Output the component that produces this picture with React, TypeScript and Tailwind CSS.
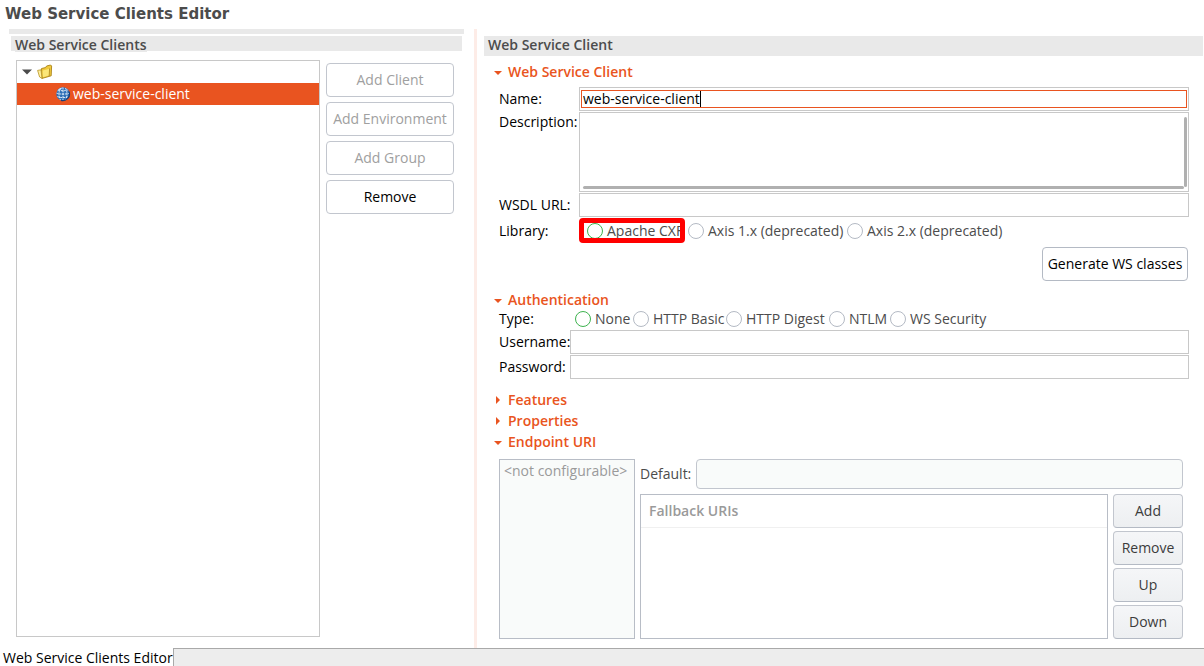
import { useState } from "react";
import type { ReactNode } from "react";

const libraries = [
  { id: "cxf", label: "Apache CXF", width: "w-[101px]" },
  { id: "axis1", label: "Axis 1.x (deprecated)", width: "w-[159px]" },
  { id: "axis2", label: "Axis 2.x (deprecated)", width: "w-[159px]" },
];

const authTypes = [
  { id: "none", label: "None", width: "w-[58px]" },
  { id: "basic", label: "HTTP Basic", width: "w-[93px]" },
  { id: "digest", label: "HTTP Digest", width: "w-[103px]" },
  { id: "ntlm", label: "NTLM", width: "w-[61px]" },
  { id: "wss", label: "WS Security", width: "w-[100px]" },
];

const clientActions = [
  { label: "Add Client", disabled: true },
  { label: "Add Environment", disabled: true },
  { label: "Add Group", disabled: true },
  { label: "Remove", disabled: false },
];

const inputClass = "h-6 w-full min-w-0 border border-[#c8c8c8] bg-white px-1 outline-none";

function FolderIcon() {
  return (
    <svg width="16" height="16" viewBox="0 0 16 16" className="shrink-0">
      <path d="M4.5 4.5 L8.5 3.6 L9.6 2 L13.6 1 L14.6 2 L14.2 11.8 L5 14.4 Z" fill="#f0c93c" stroke="#a98218" strokeWidth="0.9" />
      <path d="M5.6 6.4 L9.8 5.4 L12.8 4.6 L12.4 11.2 L5.8 13.2 Z" fill="#fbe678" />
      <path d="M12.6 4.4 L12.2 12" fill="none" stroke="#a98218" strokeWidth="0.8" />
      <path d="M0.6 6.4 L4 5.8 L5 14.4 L2.6 13 Z" fill="#fff0a0" stroke="#b8921e" strokeWidth="0.8" />
    </svg>
  );
}

function GlobeIcon() {
  return (
    <svg width="16" height="16" viewBox="0 0 16 16" className="shrink-0">
      <circle cx="8" cy="8" r="6.7" fill="#2d6fb8" />
      <path d="M2 5.5 Q4 1.5 8 1.4 Q6 4 2 5.5 Z" fill="#a9cdf0" />
      <g fill="none" stroke="#e4effa" strokeWidth="1" strokeDasharray="2 0.8">
        <path d="M3.2 4 Q8 5.5 12.8 4 M1.6 7.2 Q8 9 14.4 7.2 M2.4 10.6 Q8 12.6 13.6 10.6" />
        <path d="M8 1.5 V14.5 M5.5 2 Q2.5 8 5.5 14 M10.5 2 Q13.5 8 10.5 14" />
      </g>
      <path d="M14 5.5 A6.7 6.7 0 0 1 6 14.4" fill="none" stroke="#173f7a" strokeWidth="1.2" />
    </svg>
  );
}

function SectionTitle({ title, open, onToggle }: { title: string; open: boolean; onToggle: () => void }) {
  return (
    <button
      type="button"
      aria-expanded={open}
      onClick={onToggle}
      className="flex h-[21px] items-center gap-1.5 text-left font-semibold text-[#e95420]"
    >
      <svg width="8" height="8" viewBox="0 0 8 8" fill="currentColor">
        {open ? <path d="M0 3 H8 L4 7 Z" /> : <path d="M2 0 L6 4 L2 8 Z" />}
      </svg>
      {title}
    </button>
  );
}

function Section({ title, defaultOpen = false, children }: { title: string; defaultOpen?: boolean; children?: ReactNode }) {
  const [open, setOpen] = useState(defaultOpen);

  return (
    <section>
      <SectionTitle title={title} open={open} onToggle={() => setOpen(!open)} />
      {open && children}
    </section>
  );
}

function RadioGroup({
  name,
  options,
  highlighted,
}: {
  name: string;
  options: { id: string; label: string; width: string }[];
  highlighted?: string;
}) {
  const [value, setValue] = useState(options[0].id);

  return (
    <div role="radiogroup" aria-label={name} className="flex text-[#4c4c4c]">
      {options.map((option) => (
        <label key={option.id} className={["relative flex h-5 items-center gap-1 whitespace-nowrap", option.width].join(" ")}>
          <input
            type="radio"
            name={name}
            checked={value === option.id}
            onChange={() => setValue(option.id)}
            className="h-4 w-4 shrink-0 appearance-none rounded-full border border-[#b4bac4] bg-white checked:border-[#3eb34f]"
          />
          {option.label}
          {highlighted === option.id && (
            <span className="pointer-events-none absolute -bottom-0.5 -left-2 -top-[3px] right-[3px] rounded-[4px] border-[5px] border-[#ff0000]" />
          )}
        </label>
      ))}
    </div>
  );
}

function ClientsPanel() {
  return (
    <aside className="flex w-[474px] shrink-0 flex-col pl-[9px] pr-2.5">
      <div className="h-[5px] bg-[#e9e9e9]" />
      <h2 className="mx-0.5 mt-0.5 h-[15px] bg-[#e9e9e9] px-1 font-semibold leading-[17px] text-[#4c4c4c]">
        <span className="inline-block h-4 bg-[#e9e9e9]">Web Service Clients</span>
      </h2>
      <div className="ml-[7px] mr-2.5 mt-[9px] flex flex-1 gap-1.5 pb-[11px]">
        <ul role="tree" aria-label="Web Service Clients" className="flex-1 border border-[#c8c8c8]">
          <li role="treeitem" aria-expanded="true" aria-label="Clients" className="flex h-[22px] items-center gap-[5px] pl-[5px]">
            <svg width="10" height="6" viewBox="0 0 10 6" fill="#4c4c4c">
              <path d="M0 0.5 H10 L5 5.5 Z" />
            </svg>
            <FolderIcon />
          </li>
          <li
            role="treeitem"
            aria-selected="true"
            className="flex h-[22px] items-center gap-0.5 bg-[#e95420] pl-[38px] text-white"
          >
            <GlobeIcon />
            web-service-client
          </li>
        </ul>
        <div className="mt-[3px] flex w-32 flex-col gap-[5px]">
          {clientActions.map((action) => (
            <button
              key={action.label}
              type="button"
              disabled={action.disabled}
              className="h-[34px] whitespace-nowrap rounded border border-[#c2c6ce] bg-white text-black disabled:text-[#a0a0a0]"
            >
              {action.label}
            </button>
          ))}
        </div>
      </div>
    </aside>
  );
}

function ClientForm() {
  const [name, setName] = useState("web-service-client");

  return (
    <div className="pl-[5px]">
      <div className="mt-[5px] grid grid-cols-[80px_minmax(0,1fr)] gap-y-px">
        <label htmlFor="name" className="self-center">Name:</label>
        <div className="border border-[#c8c8c8] px-px py-[2px]">
          <div className="flex items-center border border-[#e95420] pl-px">
            <input
              id="name"
              value={name}
              onChange={(e) => setName(e.target.value)}
              className="h-4 field-sizing-content max-w-full bg-white leading-4 outline-none"
            />
            <span className="h-4 w-px bg-black" />
          </div>
        </div>
        <label htmlFor="description">Description:</label>
        <div className="relative h-20 border border-[#c8c8c8]">
          <textarea id="description" className="block h-full w-full resize-none px-1 outline-none" />
          <span className="absolute bottom-[2px] left-[3px] right-1 h-[3px] rounded-full bg-[#b0b0b0]" />
          <span className="absolute bottom-1 right-px top-1 w-[3px] rounded-full bg-[#b0b0b0]" />
        </div>
        <label htmlFor="wsdl" className="self-center">WSDL URL:</label>
        <input id="wsdl" className={inputClass} />
        <span className="mt-[3px] h-5">Library:</span>
        <div className="mt-[3px] pl-2">
          <RadioGroup name="library" options={libraries} highlighted="cxf" />
        </div>
      </div>
      <div className="mt-1.5 flex justify-end pr-px">
        <button type="button" className="h-[34px] w-[146px] whitespace-nowrap rounded border border-[#b4bac4] bg-white">
          Generate WS classes
        </button>
      </div>
    </div>
  );
}

function AuthenticationForm() {
  return (
    <div className="grid grid-cols-[71px_minmax(0,1fr)] gap-y-px pl-[5px]">
      <span className="h-[19px] leading-[18px]">Type:</span>
      <div className="-mt-px h-5 pl-[5px]">
        <RadioGroup name="auth-type" options={authTypes} />
      </div>
      <label htmlFor="username" className="self-center">Username:</label>
      <input id="username" className={inputClass} />
      <label htmlFor="password" className="self-center">Password:</label>
      <input id="password" type="password" className={inputClass} />
    </div>
  );
}

function EndpointForm() {
  return (
    <div className="mt-[7px] flex h-[180px] gap-[5px] pl-[5px] pr-1.5">
      <ul aria-label="Endpoints" className="w-[136px] shrink-0 border border-[#b8bdc6] bg-[#f9fbfa] px-1 py-px text-[#9a9a9a]">
        <li className="whitespace-nowrap">&lt;not configurable&gt;</li>
      </ul>
      <div className="flex min-w-0 flex-1 flex-col gap-[5px]">
        <div className="flex items-center gap-[5px]">
          <label htmlFor="default-uri" className="w-[51px] shrink-0 text-[#4c4c4c]">Default:</label>
          <input
            id="default-uri"
            disabled
            className="h-[30px] min-w-0 flex-1 rounded border border-[#c2c6ce] bg-[#f9fbfa] px-2"
          />
        </div>
        <div className="flex flex-1 gap-[5px]">
          <div className="flex-1 border border-[#b8bdc6]">
            <table className="w-full border-collapse">
              <thead>
                <tr>
                  <th className="h-8 border-b border-[#f0f0f0] px-2 text-left font-semibold text-[#9a9a9a]">Fallback URIs</th>
                </tr>
              </thead>
            </table>
          </div>
          <div className="flex w-[70px] flex-col gap-[3px]">
            {["Add", "Remove", "Up", "Down"].map((label) => (
              <button
                key={label}
                type="button"
                className="h-[34px] rounded border border-[#c2c6ce] border-b-[#b4bac4] bg-linear-to-b from-[#f5f6f8] to-[#edeff1] text-[#3c3c3c]"
              >
                {label}
              </button>
            ))}
          </div>
        </div>
      </div>
    </div>
  );
}

export default function App() {
  return (
    <div className="flex min-h-screen flex-col bg-white font-['Open_Sans','Noto_Sans',sans-serif] text-[14px] leading-5 text-black">
      <h1 className="h-[29px] pl-[5px] font-['DejaVu_Sans',sans-serif] text-[15px] font-bold leading-[29px] text-[#4c4c4c]">
        Web Service Clients Editor
      </h1>

      <div className="flex flex-1">
        <ClientsPanel />
        <div className="w-[3px] shrink-0 bg-[#fdece7]" />
        <main className="min-w-0 flex-1 pl-[7px] pt-[7px]">
          <h2 className="mr-px h-5 bg-[#e9e9e9] pl-1 font-semibold leading-[18px] text-[#4c4c4c]">Web Service Client</h2>
          <div className="pl-2.5 pr-[15px] pt-[5px]">
            <Section title="Web Service Client" defaultOpen>
              <ClientForm />
            </Section>
            <div className="mt-2">
              <Section title="Authentication" defaultOpen>
                <AuthenticationForm />
              </Section>
            </div>
            <div className="mt-2.5">
              <Section title="Features" />
              <Section title="Properties" />
              <Section title="Endpoint URI" defaultOpen>
                <EndpointForm />
              </Section>
            </div>
          </div>
        </main>
      </div>

      <footer className="flex h-[18px]">
        <span className="w-[173px] whitespace-nowrap pl-[3px] leading-5">Web Service Clients Editor</span>
        <span className="flex-1 border-l border-t border-[#a9a9a9] bg-[#ededed]" />
      </footer>
    </div>
  );
}
